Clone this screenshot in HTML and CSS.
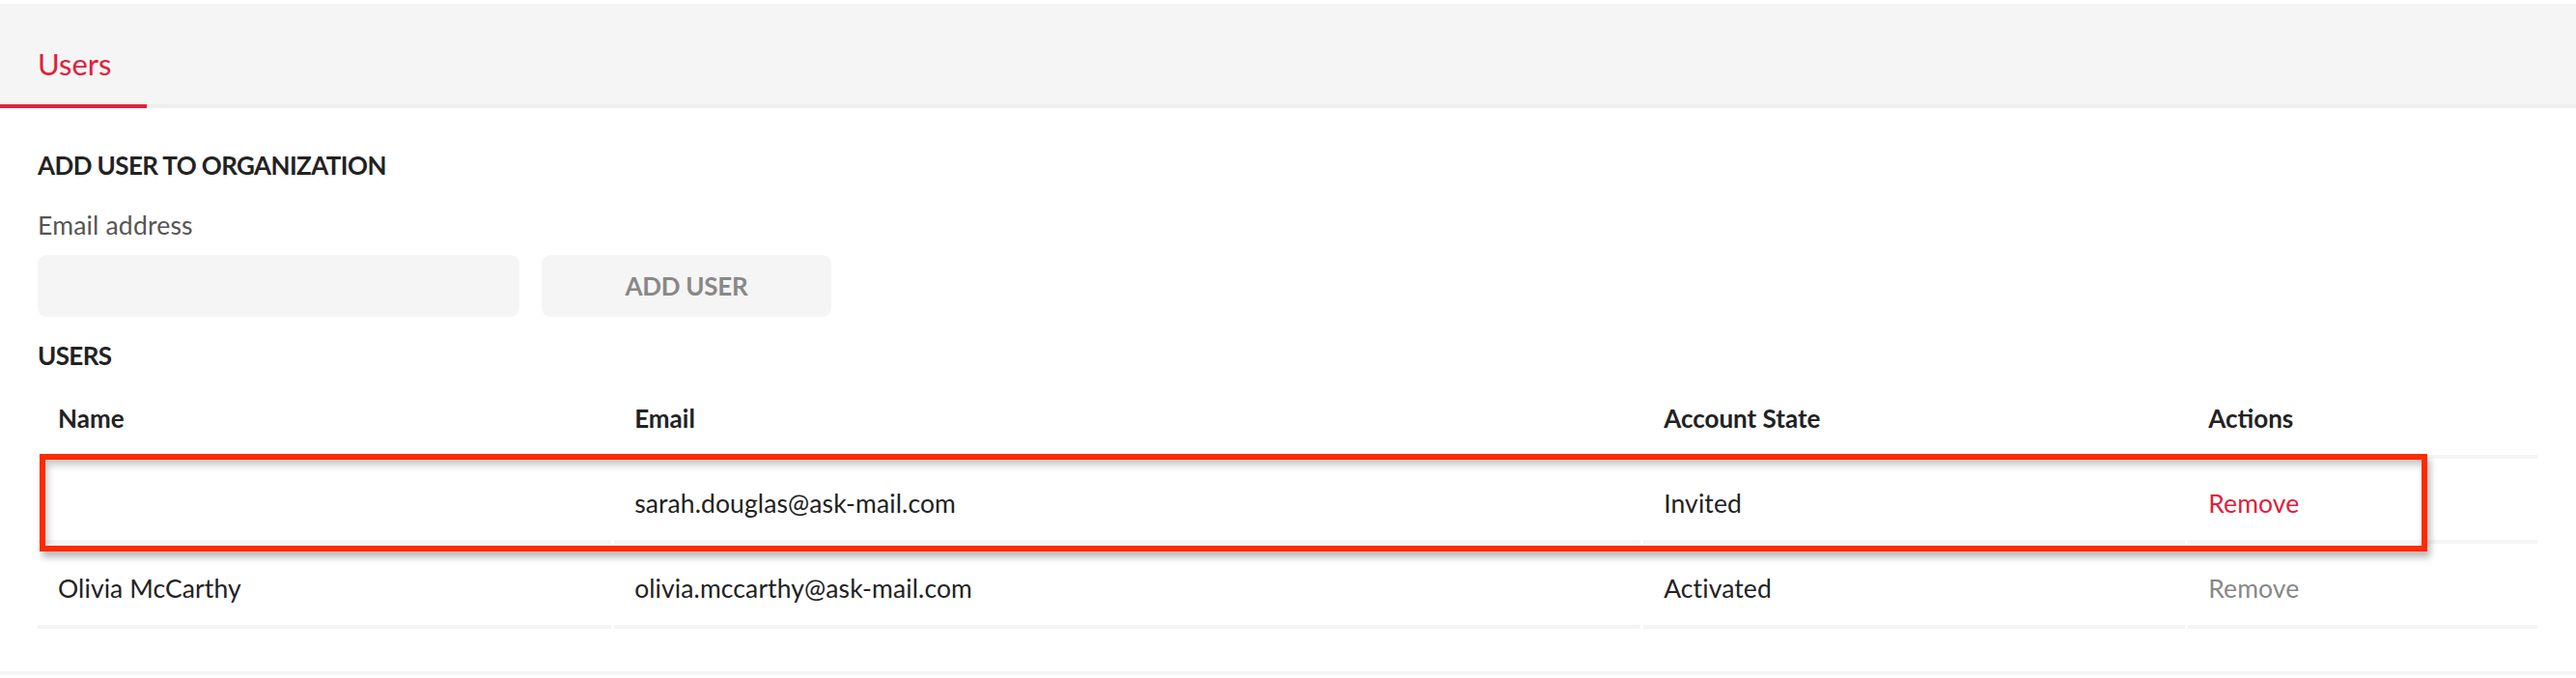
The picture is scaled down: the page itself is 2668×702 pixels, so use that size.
FILE: index.html
```html
<!DOCTYPE html>
<html lang="en">
<head>
<meta charset="utf-8">
<title>Users</title>
<link rel="stylesheet" href="styles.css">
</head>
<body>
<div class="page">
  <nav class="tabs">
    <div class="tab tab-active">Users</div>
  </nav>
  <main class="content">
    <h2 class="section-title title-add">ADD USER TO ORGANIZATION</h2>
    <label class="field-label" for="email">Email address</label>
    <div class="add-row">
      <input id="email" class="email-input" type="text">
      <button class="add-btn" type="button">ADD USER</button>
    </div>
    <h2 class="section-title title-users">USERS</h2>
    <div class="table-wrap">
      <table class="users-table">
        <thead>
          <tr>
            <th class="col-name">Name</th>
            <th class="col-email">Email</th>
            <th class="col-state">Account State</th>
            <th class="col-actions">Actions</th>
          </tr>
        </thead>
        <tbody>
          <tr>
            <td></td>
            <td>sarah.douglas@ask-mail.com</td>
            <td>Invited</td>
            <td><span class="remove">Remove</span></td>
          </tr>
          <tr>
            <td>Olivia McCarthy</td>
            <td>olivia.mccarthy@ask-mail.com</td>
            <td>Activated</td>
            <td><span class="remove remove-disabled">Remove</span></td>
          </tr>
        </tbody>
      </table>
      <div class="highlight"></div>
    </div>
  </main>
</div>
</body>
</html>
```

FILE: styles.css
```css
* { box-sizing: border-box; }

html, body {
  margin: 0;
  padding: 0;
  background: #ffffff;
}

body {
  font-family: "Lato", "Liberation Sans", sans-serif;
  color: #222222;
  padding-top: 4px;
}

.page {
  border-bottom: 4px solid #f5f5f5;
  padding-bottom: 44px;
}

.tabs {
  display: flex;
  height: 108px;
  background: #f5f5f5;
  border-bottom: 4px solid #eeeeee;
}

.tab {
  width: 152px;
  padding-left: 39px;
  padding-top: 44px;
  font-size: 31px;
  line-height: 1.2;
  margin-bottom: -4px;
}

.tab-active {
  color: #e0213b;
  border-bottom: 4px solid #e0213b;
}

.content {
  padding: 0 40px 0 39px;
}

.section-title {
  margin: 0;
  font-size: 26px;
  letter-spacing: -0.6px;
  line-height: 1.2;
  font-weight: 700;
  color: #222222;
}

.title-add {
  margin-top: 44px;
}

.field-label {
  display: block;
  margin-top: 31px;
  font-size: 26.5px;
  letter-spacing: 0.2px;
  line-height: 1.2;
  color: #555555;
}

.add-row {
  display: flex;
  gap: 23px;
  margin-top: 14px;
}

.email-input {
  width: 499px;
  height: 64px;
  border: none;
  border-radius: 9px;
  background: #f5f5f5;
  font: inherit;
  outline: none;
}

.add-btn {
  width: 300px;
  height: 64px;
  border: none;
  border-radius: 9px;
  background: #f5f5f5;
  font-family: inherit;
  font-size: 26px;
  letter-spacing: -0.3px;
  font-weight: 700;
  color: #888888;
  padding: 0;
}

.title-users {
  margin-top: 25px;
}

.table-wrap {
  position: relative;
  margin-top: 12px;
}

.users-table {
  table-layout: fixed;
  border-collapse: separate;
  border-spacing: 3px 0;
  margin: 0 -3px;
  width: calc(100% + 6px);
}

.col-name { width: 593px; }
.col-email { width: 1061px; }
.col-state { width: 560px; }
.col-actions { width: 361px; }

.users-table th,
.users-table td {
  text-align: left;
  padding: 0 0 0 21px;
  border-bottom: 4px solid #f5f5f5;
  font-size: 26.5px;
  line-height: 1.2;
}

.users-table th {
  font-size: 26px;
  font-weight: 700;
  padding-top: 22px;
  padding-bottom: 22px;
  color: #222222;
}

.users-table td {
  height: 88px;
  padding-top: 10px;
  vertical-align: middle;
  letter-spacing: 0.1px;
  color: #222222;
}

.remove {
  color: #e0213b;
}

.remove-disabled {
  color: #888888;
}

.highlight {
  position: absolute;
  left: 2px;
  top: 74px;
  width: 2473px;
  height: 101px;
  border: 6px solid #ff2a00;
  box-shadow: 3px 6px 7px rgba(0, 0, 0, 0.28), inset 3px 6px 7px rgba(0, 0, 0, 0.2);
  pointer-events: none;
}
```
